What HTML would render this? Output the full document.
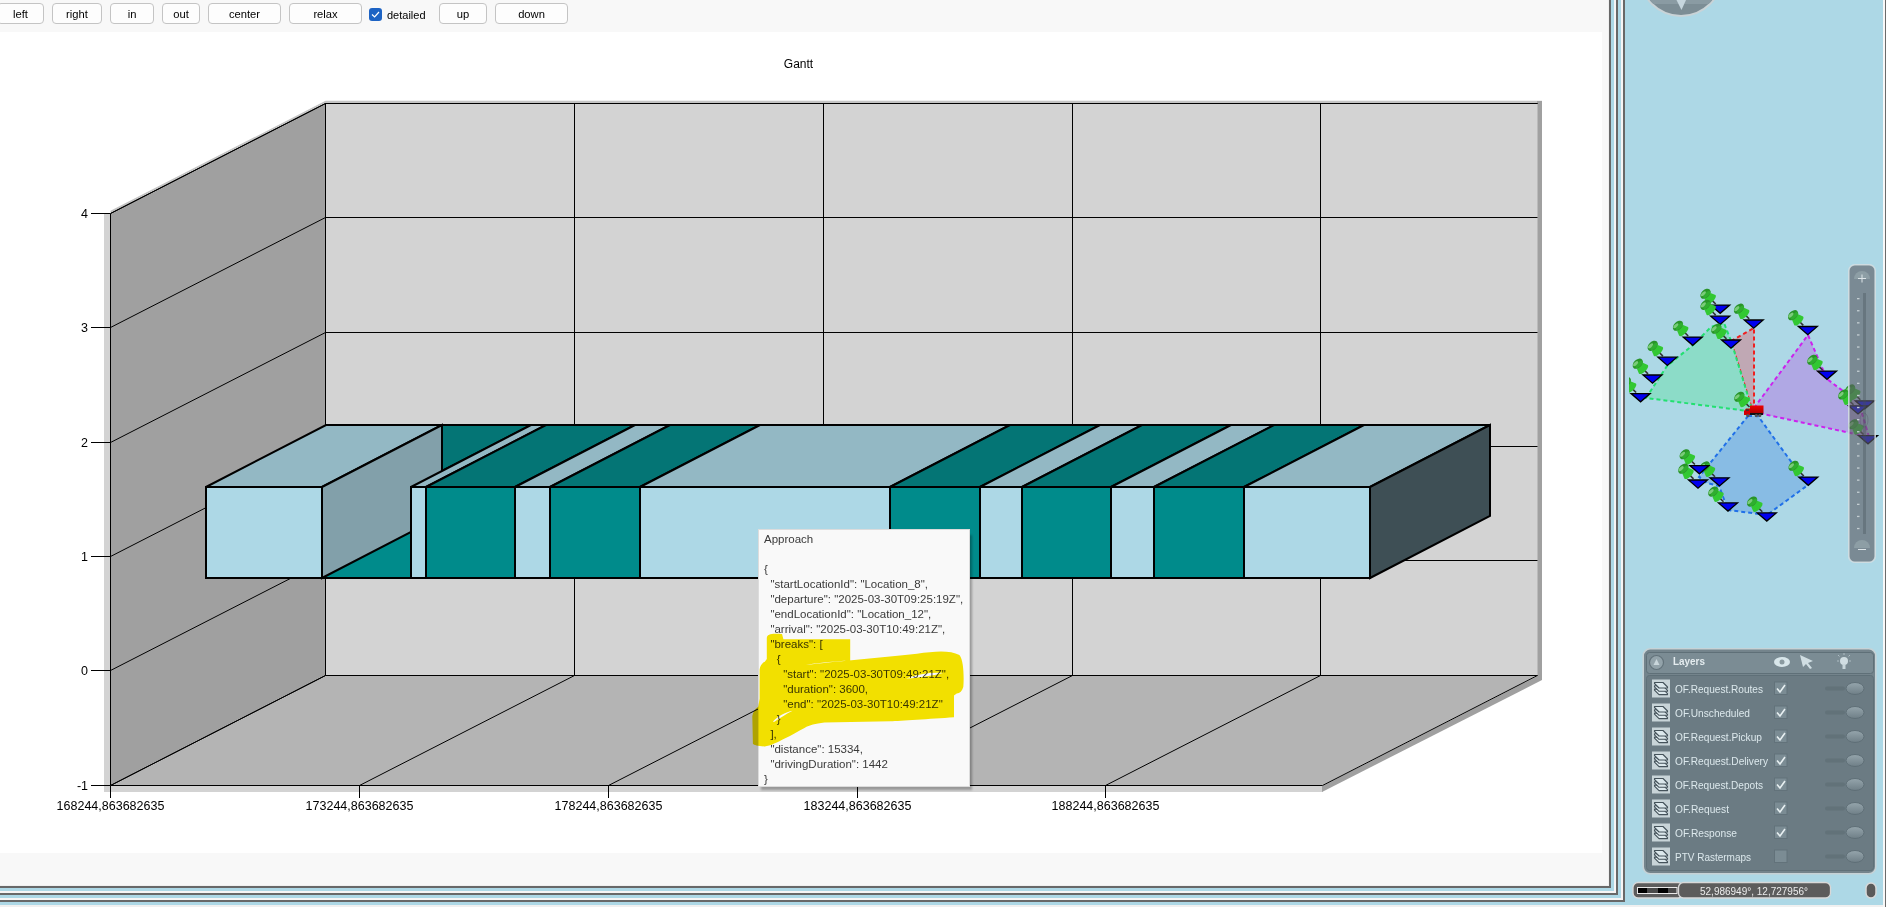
<!DOCTYPE html>
<html><head><meta charset="utf-8"><title>Gantt</title>
<style>
html,body{margin:0;padding:0;}
body{width:1886px;height:907px;overflow:hidden;position:relative;background:#f0f0f0;font-family:"Liberation Sans", sans-serif;}
.abs{position:absolute;}
.btn{position:absolute;top:3px;height:19px;border:1px solid #c4c4c4;border-radius:4px;background:#fdfdfd;font-size:11.2px;color:#000;text-align:center;line-height:21px;box-sizing:content-box;white-space:nowrap;}
svg{position:absolute;left:0;top:0;overflow:visible;}
</style></head><body>

<div class="abs" style="left:0;top:0;width:1886px;height:905px;background:#add8e6"></div>
<div class="abs" style="left:0;top:0;width:1625px;height:902px;background:#686868"></div>
<div class="abs" style="left:0;top:0;width:1623px;height:900px;background:#f6f4f4"></div>
<div class="abs" style="left:0;top:0;width:1621px;height:898px;background:#add8e6"></div>
<div class="abs" style="left:0;top:0;width:1618px;height:895px;background:#686868"></div>
<div class="abs" style="left:0;top:0;width:1616px;height:893px;background:#f6f4f4"></div>
<div class="abs" style="left:0;top:0;width:1614px;height:891px;background:#add8e6"></div>
<div class="abs" style="left:0;top:0;width:1611px;height:888px;background:#686868"></div>
<div class="abs" style="left:0;top:0;width:1609px;height:886px;background:#f0f0f0"></div>
<div class="abs" style="left:0;top:0;width:1608px;height:885px;background:#f8f8f8"></div>
<div class="abs" style="left:0;top:32px;width:1602px;height:821px;background:#ffffff"></div>
<div class="btn" style="left:-3px;width:45px">left</div>
<div class="btn" style="left:52px;width:48px">right</div>
<div class="btn" style="left:110px;width:42px">in</div>
<div class="btn" style="left:162px;width:36px">out</div>
<div class="btn" style="left:208px;width:71px">center</div>
<div class="btn" style="left:289px;width:71px">relax</div>
<div class="btn" style="left:439px;width:46px">up</div>
<div class="btn" style="left:495px;width:71px">down</div>
<div class="abs" style="left:369px;top:8px;width:13px;height:13px;border-radius:3px;background:#1d63c4"></div>
<svg width="1886" height="907" style="pointer-events:none"><path d="M372 14.5 L374.6 17 L379 12" stroke="#fff" stroke-width="1.2" fill="none"/></svg>
<div class="abs" style="left:387px;top:8px;font-size:11px;color:#000;line-height:15px">detailed</div>
<svg width="1886" height="907" style="font-family:"Liberation Sans", sans-serif"><rect x="104" y="214" width="6" height="578" fill="#d3d3d3"/><polygon points="110.5,210.8 325.5,100.8 1542,100.8 1542,103.5 325.5,103.5 110.5,213.5" fill="#c4c4c4"/><rect x="1537" y="101" width="5" height="579" fill="#a0a0a0"/><rect x="104" y="786" width="1219" height="6" fill="#d3d3d3"/><polygon points="1322,786 1537.5,676 1542,676 1542,680 1322,792" fill="#a0a0a0"/><polygon points="110.5,213.5 325.5,103.5 325.5,675.5 110.5,785.5" fill="#a0a0a0"/><rect x="325.5" y="103.5" width="1212" height="572" fill="#d3d3d3"/><polygon points="110.5,785.5 325.5,675.5 1537.5,675.5 1322.5,785.5" fill="#b4b4b4"/><path d="M110.5 785.5 L325.5 675.5 L1537.5 675.5 M110.5 670.5 L325.5 560.5 L1537.5 560.5 M110.5 556.5 L325.5 446.5 L1537.5 446.5 M110.5 442.5 L325.5 332.5 L1537.5 332.5 M110.5 327.5 L325.5 217.5 L1537.5 217.5 M110.5 213.5 L325.5 103.5 L1537.5 103.5 M110.5 785.5 L325.5 675.5 L325.5 103.5 M359.5 785.5 L574.5 675.5 L574.5 103.5 M608.5 785.5 L823.5 675.5 L823.5 103.5 M857.5 785.5 L1072.5 675.5 L1072.5 103.5 M1105.5 785.5 L1320.5 675.5 L1320.5 103.5" stroke="#000" stroke-width="1" fill="none"/><path d="M110.5 785.5 L110.5 213.5 L325.5 103.5 L1537.5 103.5 M325.5 103.5 L325.5 675.5 M110.5 785.5 L1322.5 785.5 L1537.5 675.5" stroke="#000" stroke-width="1" fill="none"/><path d="M91 785.5 L110 785.5 M91 670.5 L110 670.5 M91 556.5 L110 556.5 M91 442.5 L110 442.5 M91 327.5 L110 327.5 M91 213.5 L110 213.5 M110.5 786 L110.5 798 M359.5 786 L359.5 798 M608.5 786 L608.5 798 M857.5 786 L857.5 798 M1105.5 786 L1105.5 798" stroke="#000" stroke-width="1" fill="none"/><text x="88" y="790.0" font-size="12.5" text-anchor="end" fill="#000">-1</text><text x="88" y="675.0" font-size="12.5" text-anchor="end" fill="#000">0</text><text x="88" y="561.0" font-size="12.5" text-anchor="end" fill="#000">1</text><text x="88" y="447.0" font-size="12.5" text-anchor="end" fill="#000">2</text><text x="88" y="332.0" font-size="12.5" text-anchor="end" fill="#000">3</text><text x="88" y="218.0" font-size="12.5" text-anchor="end" fill="#000">4</text><text x="110.5" y="810" font-size="12.5" text-anchor="middle" fill="#000">168244,863682635</text><text x="359.5" y="810" font-size="12.5" text-anchor="middle" fill="#000">173244,863682635</text><text x="608.5" y="810" font-size="12.5" text-anchor="middle" fill="#000">178244,863682635</text><text x="857.5" y="810" font-size="12.5" text-anchor="middle" fill="#000">183244,863682635</text><text x="1105.5" y="810" font-size="12.5" text-anchor="middle" fill="#000">188244,863682635</text><text x="798.5" y="67.5" font-size="12" text-anchor="middle" fill="#000">Gantt</text><polygon points="322,487 442,425 531,425 411,487" fill="#047575" stroke="#000" stroke-width="2" stroke-linejoin="miter"/><rect x="322" y="487" width="89" height="91" fill="#008b8b" stroke="#000" stroke-width="2"/><polygon points="206,487 326,425 442,425 322,487" fill="#93b8c4" stroke="#000" stroke-width="2" stroke-linejoin="miter"/><rect x="206" y="487" width="116" height="91" fill="#add8e6" stroke="#000" stroke-width="2"/><polygon points="322,487 442,425 442,516 322,578" fill="#82a0aa" stroke="#000" stroke-width="2"/><polygon points="411,487 531,425 546,425 426,487" fill="#93b8c4" stroke="#000" stroke-width="2" stroke-linejoin="miter"/><rect x="411" y="487" width="15" height="91" fill="#add8e6" stroke="#000" stroke-width="2"/><polygon points="426,487 546,425 635,425 515,487" fill="#047575" stroke="#000" stroke-width="2" stroke-linejoin="miter"/><rect x="426" y="487" width="89" height="91" fill="#008b8b" stroke="#000" stroke-width="2"/><polygon points="515,487 635,425 670,425 550,487" fill="#93b8c4" stroke="#000" stroke-width="2" stroke-linejoin="miter"/><rect x="515" y="487" width="35" height="91" fill="#add8e6" stroke="#000" stroke-width="2"/><polygon points="550,487 670,425 760,425 640,487" fill="#047575" stroke="#000" stroke-width="2" stroke-linejoin="miter"/><rect x="550" y="487" width="90" height="91" fill="#008b8b" stroke="#000" stroke-width="2"/><polygon points="640,487 760,425 1010,425 890,487" fill="#93b8c4" stroke="#000" stroke-width="2" stroke-linejoin="miter"/><rect x="640" y="487" width="250" height="91" fill="#add8e6" stroke="#000" stroke-width="2"/><polygon points="890,487 1010,425 1100,425 980,487" fill="#047575" stroke="#000" stroke-width="2" stroke-linejoin="miter"/><rect x="890" y="487" width="90" height="91" fill="#008b8b" stroke="#000" stroke-width="2"/><polygon points="980,487 1100,425 1142,425 1022,487" fill="#93b8c4" stroke="#000" stroke-width="2" stroke-linejoin="miter"/><rect x="980" y="487" width="42" height="91" fill="#add8e6" stroke="#000" stroke-width="2"/><polygon points="1022,487 1142,425 1231,425 1111,487" fill="#047575" stroke="#000" stroke-width="2" stroke-linejoin="miter"/><rect x="1022" y="487" width="89" height="91" fill="#008b8b" stroke="#000" stroke-width="2"/><polygon points="1111,487 1231,425 1274,425 1154,487" fill="#93b8c4" stroke="#000" stroke-width="2" stroke-linejoin="miter"/><rect x="1111" y="487" width="43" height="91" fill="#add8e6" stroke="#000" stroke-width="2"/><polygon points="1154,487 1274,425 1364,425 1244,487" fill="#047575" stroke="#000" stroke-width="2" stroke-linejoin="miter"/><rect x="1154" y="487" width="90" height="91" fill="#008b8b" stroke="#000" stroke-width="2"/><polygon points="1244,487 1364,425 1490,425 1370,487" fill="#93b8c4" stroke="#000" stroke-width="2" stroke-linejoin="miter"/><rect x="1244" y="487" width="126" height="91" fill="#add8e6" stroke="#000" stroke-width="2"/><polygon points="1370,487 1490,425 1490,516 1370,578" fill="#3e4f55" stroke="#000" stroke-width="2"/></svg>
<div class="abs" style="left:761px;top:535px;width:211px;height:255px;background:rgba(0,0,0,0.28);filter:blur(1.2px)"></div>
<div class="abs" style="left:758px;top:529px;width:210px;height:256px;background:#f9f9f9;border:1px solid #dcdcdc"></div>
<div class="abs" id="tt" style="left:764px;top:532px;font-size:11.5px;line-height:15px;color:#3a3a3a;white-space:pre">Approach

{
  "startLocationId": "Location_8",
  "departure": "2025-03-30T09:25:19Z",
  "endLocationId": "Location_12",
  "arrival": "2025-03-30T10:49:21Z",
  "breaks": [
    {
      "start": "2025-03-30T09:49:21Z",
      "duration": 3600,
      "end": "2025-03-30T10:49:21Z"
    }
  ],
  "distance": 15334,
  "drivingDuration": 1442
}</div>
<svg width="1886" height="907" style="mix-blend-mode:multiply"><path fill="#f8e600" fill-rule="evenodd" d="M766.8 637.9 C767 634, 772 633, 782 634 L783.4 639.3 L850.2 639.3 L850.2 660.4 C835 661, 815 663, 805.9 665 C830 662, 880 658, 917 653.8 C935 651, 950 650, 959.4 655.1 C964 660, 964 680, 963.3 686.9 C962 691, 960 693, 956.7 693.5 L954 695.5 L954 717.3 C930 719, 900 721, 890.6 721.3 L824.4 722.6 C815 724, 810 725, 804.5 727.9 C798 731, 792 735, 784.7 738.5 C778 742, 770 746, 764.8 746.4 C758 746.5, 754 745, 752.9 743.8 L752.3 716 C753 712, 755 709, 758.2 706.7 L759.6 698.8 L759.6 669.7 C760 666, 762 663, 764.8 661.8 L766.8 659.1 Z M773 721.5 C778 716, 786 712, 792.6 710.7 C786 714, 780 718, 774 722 Z M906 678.5 C918 674, 932 672, 943 673 C935 675, 920 678, 906 678.5 Z"/></svg>
<svg width="1886" height="907"><defs><clipPath id="mapclip"><rect x="1629" y="0" width="254" height="905"/></clipPath></defs><rect x="1883" y="0" width="2" height="907" fill="#f8f8f8"/><rect x="1885" y="0" width="1" height="907" fill="#6b6b6b"/><g clip-path="url(#mapclip)"><circle cx="1681" cy="-25" r="42" fill="#c9d3d7"/><circle cx="1681" cy="-25" r="40" fill="#7c8d95"/><clipPath id="cc"><circle cx="1681" cy="-25" r="40"/></clipPath><polygon clip-path="url(#cc)" points="1640,0 1720,0 1722,4 1640,4" fill="#8a9ba3"/><polygon points="1676.5,0 1686,0 1681.5,10" fill="#c6d6de"/><polygon points="1731,341 1754,328 1754,409 1752,409" fill="#c0a8b4" stroke="#ee2020" stroke-width="2" stroke-dasharray="4,3"/><polygon points="1646,398 1667,366 1693,345 1711,327 1724,323 1731,341 1752,409 1748,411" fill="#8cdcc8" stroke="#22e070" stroke-width="2" stroke-dasharray="4,3"/><polygon points="1754,408 1808,335 1827,379 1859,403 1869,437 1763,414" fill="#b0a8e4" stroke="#cc22ee" stroke-width="2" stroke-dasharray="4,3"/><polygon points="1748,416 1758,416 1808,485 1767,515 1728,510 1719,486 1707,483 1699,477" fill="#88bce4" stroke="#2070e8" stroke-width="2" stroke-dasharray="4,3"/><g transform="translate(1640.6,401.8)"><g transform="translate(-4.5,-9.3) rotate(-45)"><line x1="0" y1="0" x2="0" y2="-5.5" stroke="#333" stroke-width="1.6"/><path d="M-6.2 -6.5 C-6.2 -3, 6.2 -3, 6.2 -6.5 L4.2 -11.5 L-4.2 -11.5 Z" fill="#32c832"/><ellipse cx="0" cy="-14.5" rx="6" ry="4" fill="#299429"/><ellipse cx="0.5" cy="-13" rx="4.8" ry="2" fill="#2fae2f"/><ellipse cx="-1.5" cy="-16" rx="3.2" ry="1.5" fill="#7acc7a"/></g><polygon points="-9.5,-8.2 9.5,-8.2 0,0" fill="#0000f0" stroke="#000" stroke-width="1.3" stroke-linejoin="miter"/></g><g transform="translate(1652.5,383.2)"><g transform="translate(-4.5,-9.3) rotate(-45)"><line x1="0" y1="0" x2="0" y2="-5.5" stroke="#333" stroke-width="1.6"/><path d="M-6.2 -6.5 C-6.2 -3, 6.2 -3, 6.2 -6.5 L4.2 -11.5 L-4.2 -11.5 Z" fill="#32c832"/><ellipse cx="0" cy="-14.5" rx="6" ry="4" fill="#299429"/><ellipse cx="0.5" cy="-13" rx="4.8" ry="2" fill="#2fae2f"/><ellipse cx="-1.5" cy="-16" rx="3.2" ry="1.5" fill="#7acc7a"/></g><polygon points="-9.5,-8.2 9.5,-8.2 0,0" fill="#0000f0" stroke="#000" stroke-width="1.3" stroke-linejoin="miter"/></g><g transform="translate(1667.4,365.4)"><g transform="translate(-4.5,-9.3) rotate(-45)"><line x1="0" y1="0" x2="0" y2="-5.5" stroke="#333" stroke-width="1.6"/><path d="M-6.2 -6.5 C-6.2 -3, 6.2 -3, 6.2 -6.5 L4.2 -11.5 L-4.2 -11.5 Z" fill="#32c832"/><ellipse cx="0" cy="-14.5" rx="6" ry="4" fill="#299429"/><ellipse cx="0.5" cy="-13" rx="4.8" ry="2" fill="#2fae2f"/><ellipse cx="-1.5" cy="-16" rx="3.2" ry="1.5" fill="#7acc7a"/></g><polygon points="-9.5,-8.2 9.5,-8.2 0,0" fill="#0000f0" stroke="#000" stroke-width="1.3" stroke-linejoin="miter"/></g><g transform="translate(1692.7,345.3)"><g transform="translate(-4.5,-9.3) rotate(-45)"><line x1="0" y1="0" x2="0" y2="-5.5" stroke="#333" stroke-width="1.6"/><path d="M-6.2 -6.5 C-6.2 -3, 6.2 -3, 6.2 -6.5 L4.2 -11.5 L-4.2 -11.5 Z" fill="#32c832"/><ellipse cx="0" cy="-14.5" rx="6" ry="4" fill="#299429"/><ellipse cx="0.5" cy="-13" rx="4.8" ry="2" fill="#2fae2f"/><ellipse cx="-1.5" cy="-16" rx="3.2" ry="1.5" fill="#7acc7a"/></g><polygon points="-9.5,-8.2 9.5,-8.2 0,0" fill="#0000f0" stroke="#000" stroke-width="1.3" stroke-linejoin="miter"/></g><g transform="translate(1720.2,313.3)"><g transform="translate(-4.5,-9.3) rotate(-45)"><line x1="0" y1="0" x2="0" y2="-5.5" stroke="#333" stroke-width="1.6"/><path d="M-6.2 -6.5 C-6.2 -3, 6.2 -3, 6.2 -6.5 L4.2 -11.5 L-4.2 -11.5 Z" fill="#32c832"/><ellipse cx="0" cy="-14.5" rx="6" ry="4" fill="#299429"/><ellipse cx="0.5" cy="-13" rx="4.8" ry="2" fill="#2fae2f"/><ellipse cx="-1.5" cy="-16" rx="3.2" ry="1.5" fill="#7acc7a"/></g><polygon points="-9.5,-8.2 9.5,-8.2 0,0" fill="#0000f0" stroke="#000" stroke-width="1.3" stroke-linejoin="miter"/></g><g transform="translate(1720.2,324.4)"><g transform="translate(-4.5,-9.3) rotate(-45)"><line x1="0" y1="0" x2="0" y2="-5.5" stroke="#333" stroke-width="1.6"/><path d="M-6.2 -6.5 C-6.2 -3, 6.2 -3, 6.2 -6.5 L4.2 -11.5 L-4.2 -11.5 Z" fill="#32c832"/><ellipse cx="0" cy="-14.5" rx="6" ry="4" fill="#299429"/><ellipse cx="0.5" cy="-13" rx="4.8" ry="2" fill="#2fae2f"/><ellipse cx="-1.5" cy="-16" rx="3.2" ry="1.5" fill="#7acc7a"/></g><polygon points="-9.5,-8.2 9.5,-8.2 0,0" fill="#0000f0" stroke="#000" stroke-width="1.3" stroke-linejoin="miter"/></g><g transform="translate(1731,348.2)"><g transform="translate(-4.5,-9.3) rotate(-45)"><line x1="0" y1="0" x2="0" y2="-5.5" stroke="#333" stroke-width="1.6"/><path d="M-6.2 -6.5 C-6.2 -3, 6.2 -3, 6.2 -6.5 L4.2 -11.5 L-4.2 -11.5 Z" fill="#32c832"/><ellipse cx="0" cy="-14.5" rx="6" ry="4" fill="#299429"/><ellipse cx="0.5" cy="-13" rx="4.8" ry="2" fill="#2fae2f"/><ellipse cx="-1.5" cy="-16" rx="3.2" ry="1.5" fill="#7acc7a"/></g><polygon points="-9.5,-8.2 9.5,-8.2 0,0" fill="#0000f0" stroke="#000" stroke-width="1.3" stroke-linejoin="miter"/></g><g transform="translate(1753.7,328.2)"><g transform="translate(-4.5,-9.3) rotate(-45)"><line x1="0" y1="0" x2="0" y2="-5.5" stroke="#333" stroke-width="1.6"/><path d="M-6.2 -6.5 C-6.2 -3, 6.2 -3, 6.2 -6.5 L4.2 -11.5 L-4.2 -11.5 Z" fill="#32c832"/><ellipse cx="0" cy="-14.5" rx="6" ry="4" fill="#299429"/><ellipse cx="0.5" cy="-13" rx="4.8" ry="2" fill="#2fae2f"/><ellipse cx="-1.5" cy="-16" rx="3.2" ry="1.5" fill="#7acc7a"/></g><polygon points="-9.5,-8.2 9.5,-8.2 0,0" fill="#0000f0" stroke="#000" stroke-width="1.3" stroke-linejoin="miter"/></g><g transform="translate(1807.8,334.7)"><g transform="translate(-4.5,-9.3) rotate(-45)"><line x1="0" y1="0" x2="0" y2="-5.5" stroke="#333" stroke-width="1.6"/><path d="M-6.2 -6.5 C-6.2 -3, 6.2 -3, 6.2 -6.5 L4.2 -11.5 L-4.2 -11.5 Z" fill="#32c832"/><ellipse cx="0" cy="-14.5" rx="6" ry="4" fill="#299429"/><ellipse cx="0.5" cy="-13" rx="4.8" ry="2" fill="#2fae2f"/><ellipse cx="-1.5" cy="-16" rx="3.2" ry="1.5" fill="#7acc7a"/></g><polygon points="-9.5,-8.2 9.5,-8.2 0,0" fill="#0000f0" stroke="#000" stroke-width="1.3" stroke-linejoin="miter"/></g><g transform="translate(1827,379.3)"><g transform="translate(-4.5,-9.3) rotate(-45)"><line x1="0" y1="0" x2="0" y2="-5.5" stroke="#333" stroke-width="1.6"/><path d="M-6.2 -6.5 C-6.2 -3, 6.2 -3, 6.2 -6.5 L4.2 -11.5 L-4.2 -11.5 Z" fill="#32c832"/><ellipse cx="0" cy="-14.5" rx="6" ry="4" fill="#299429"/><ellipse cx="0.5" cy="-13" rx="4.8" ry="2" fill="#2fae2f"/><ellipse cx="-1.5" cy="-16" rx="3.2" ry="1.5" fill="#7acc7a"/></g><polygon points="-9.5,-8.2 9.5,-8.2 0,0" fill="#0000f0" stroke="#000" stroke-width="1.3" stroke-linejoin="miter"/></g><g transform="translate(1864.8,409)"><g transform="translate(-4.5,-9.3) rotate(-45)"><line x1="0" y1="0" x2="0" y2="-5.5" stroke="#333" stroke-width="1.6"/><path d="M-6.2 -6.5 C-6.2 -3, 6.2 -3, 6.2 -6.5 L4.2 -11.5 L-4.2 -11.5 Z" fill="#32c832"/><ellipse cx="0" cy="-14.5" rx="6" ry="4" fill="#299429"/><ellipse cx="0.5" cy="-13" rx="4.8" ry="2" fill="#2fae2f"/><ellipse cx="-1.5" cy="-16" rx="3.2" ry="1.5" fill="#7acc7a"/></g><polygon points="-9.5,-8.2 9.5,-8.2 0,0" fill="#0000f0" stroke="#000" stroke-width="1.3" stroke-linejoin="miter"/></g><g transform="translate(1858,414)"><g transform="translate(-4.5,-9.3) rotate(-45)"><line x1="0" y1="0" x2="0" y2="-5.5" stroke="#333" stroke-width="1.6"/><path d="M-6.2 -6.5 C-6.2 -3, 6.2 -3, 6.2 -6.5 L4.2 -11.5 L-4.2 -11.5 Z" fill="#32c832"/><ellipse cx="0" cy="-14.5" rx="6" ry="4" fill="#299429"/><ellipse cx="0.5" cy="-13" rx="4.8" ry="2" fill="#2fae2f"/><ellipse cx="-1.5" cy="-16" rx="3.2" ry="1.5" fill="#7acc7a"/></g><polygon points="-9.5,-8.2 9.5,-8.2 0,0" fill="#0000f0" stroke="#000" stroke-width="1.3" stroke-linejoin="miter"/></g><g transform="translate(1868,443.8)"><g transform="translate(-4.5,-9.3) rotate(-45)"><line x1="0" y1="0" x2="0" y2="-5.5" stroke="#333" stroke-width="1.6"/><path d="M-6.2 -6.5 C-6.2 -3, 6.2 -3, 6.2 -6.5 L4.2 -11.5 L-4.2 -11.5 Z" fill="#32c832"/><ellipse cx="0" cy="-14.5" rx="6" ry="4" fill="#299429"/><ellipse cx="0.5" cy="-13" rx="4.8" ry="2" fill="#2fae2f"/><ellipse cx="-1.5" cy="-16" rx="3.2" ry="1.5" fill="#7acc7a"/></g><polygon points="-9.5,-8.2 9.5,-8.2 0,0" fill="#0000f0" stroke="#000" stroke-width="1.3" stroke-linejoin="miter"/></g><g transform="translate(1719.5,486)"><g transform="translate(-4.5,-9.3) rotate(-45)"><line x1="0" y1="0" x2="0" y2="-5.5" stroke="#333" stroke-width="1.6"/><path d="M-6.2 -6.5 C-6.2 -3, 6.2 -3, 6.2 -6.5 L4.2 -11.5 L-4.2 -11.5 Z" fill="#32c832"/><ellipse cx="0" cy="-14.5" rx="6" ry="4" fill="#299429"/><ellipse cx="0.5" cy="-13" rx="4.8" ry="2" fill="#2fae2f"/><ellipse cx="-1.5" cy="-16" rx="3.2" ry="1.5" fill="#7acc7a"/></g><polygon points="-9.5,-8.2 9.5,-8.2 0,0" fill="#0000f0" stroke="#000" stroke-width="1.3" stroke-linejoin="miter"/></g><g transform="translate(1699.4,473.8)"><g transform="translate(-4.5,-9.3) rotate(-45)"><line x1="0" y1="0" x2="0" y2="-5.5" stroke="#333" stroke-width="1.6"/><path d="M-6.2 -6.5 C-6.2 -3, 6.2 -3, 6.2 -6.5 L4.2 -11.5 L-4.2 -11.5 Z" fill="#32c832"/><ellipse cx="0" cy="-14.5" rx="6" ry="4" fill="#299429"/><ellipse cx="0.5" cy="-13" rx="4.8" ry="2" fill="#2fae2f"/><ellipse cx="-1.5" cy="-16" rx="3.2" ry="1.5" fill="#7acc7a"/></g><polygon points="-9.5,-8.2 9.5,-8.2 0,0" fill="#0000f0" stroke="#000" stroke-width="1.3" stroke-linejoin="miter"/></g><g transform="translate(1698,488.2)"><g transform="translate(-4.5,-9.3) rotate(-45)"><line x1="0" y1="0" x2="0" y2="-5.5" stroke="#333" stroke-width="1.6"/><path d="M-6.2 -6.5 C-6.2 -3, 6.2 -3, 6.2 -6.5 L4.2 -11.5 L-4.2 -11.5 Z" fill="#32c832"/><ellipse cx="0" cy="-14.5" rx="6" ry="4" fill="#299429"/><ellipse cx="0.5" cy="-13" rx="4.8" ry="2" fill="#2fae2f"/><ellipse cx="-1.5" cy="-16" rx="3.2" ry="1.5" fill="#7acc7a"/></g><polygon points="-9.5,-8.2 9.5,-8.2 0,0" fill="#0000f0" stroke="#000" stroke-width="1.3" stroke-linejoin="miter"/></g><g transform="translate(1728,511.1)"><g transform="translate(-4.5,-9.3) rotate(-45)"><line x1="0" y1="0" x2="0" y2="-5.5" stroke="#333" stroke-width="1.6"/><path d="M-6.2 -6.5 C-6.2 -3, 6.2 -3, 6.2 -6.5 L4.2 -11.5 L-4.2 -11.5 Z" fill="#32c832"/><ellipse cx="0" cy="-14.5" rx="6" ry="4" fill="#299429"/><ellipse cx="0.5" cy="-13" rx="4.8" ry="2" fill="#2fae2f"/><ellipse cx="-1.5" cy="-16" rx="3.2" ry="1.5" fill="#7acc7a"/></g><polygon points="-9.5,-8.2 9.5,-8.2 0,0" fill="#0000f0" stroke="#000" stroke-width="1.3" stroke-linejoin="miter"/></g><g transform="translate(1766.8,521.1)"><g transform="translate(-4.5,-9.3) rotate(-45)"><line x1="0" y1="0" x2="0" y2="-5.5" stroke="#333" stroke-width="1.6"/><path d="M-6.2 -6.5 C-6.2 -3, 6.2 -3, 6.2 -6.5 L4.2 -11.5 L-4.2 -11.5 Z" fill="#32c832"/><ellipse cx="0" cy="-14.5" rx="6" ry="4" fill="#299429"/><ellipse cx="0.5" cy="-13" rx="4.8" ry="2" fill="#2fae2f"/><ellipse cx="-1.5" cy="-16" rx="3.2" ry="1.5" fill="#7acc7a"/></g><polygon points="-9.5,-8.2 9.5,-8.2 0,0" fill="#0000f0" stroke="#000" stroke-width="1.3" stroke-linejoin="miter"/></g><g transform="translate(1808.3,485.3)"><g transform="translate(-4.5,-9.3) rotate(-45)"><line x1="0" y1="0" x2="0" y2="-5.5" stroke="#333" stroke-width="1.6"/><path d="M-6.2 -6.5 C-6.2 -3, 6.2 -3, 6.2 -6.5 L4.2 -11.5 L-4.2 -11.5 Z" fill="#32c832"/><ellipse cx="0" cy="-14.5" rx="6" ry="4" fill="#299429"/><ellipse cx="0.5" cy="-13" rx="4.8" ry="2" fill="#2fae2f"/><ellipse cx="-1.5" cy="-16" rx="3.2" ry="1.5" fill="#7acc7a"/></g><polygon points="-9.5,-8.2 9.5,-8.2 0,0" fill="#0000f0" stroke="#000" stroke-width="1.3" stroke-linejoin="miter"/></g><g transform="translate(1749.5,407)"><g transform="rotate(-45)"><line x1="0" y1="0" x2="0" y2="-5.5" stroke="#333" stroke-width="1.6"/><path d="M-6.2 -6.5 C-6.2 -3, 6.2 -3, 6.2 -6.5 L4.2 -11.5 L-4.2 -11.5 Z" fill="#32c832"/><ellipse cx="0" cy="-14.5" rx="6" ry="4" fill="#299429"/><ellipse cx="0.5" cy="-13" rx="4.8" ry="2" fill="#2fae2f"/><ellipse cx="-1.5" cy="-16" rx="3.2" ry="1.5" fill="#7acc7a"/></g></g><defs><linearGradient id="tg" x1="0" y1="0" x2="0" y2="1"><stop offset="0" stop-color="#f00000"/><stop offset="1" stop-color="#a80000"/></linearGradient></defs><rect x="1750" y="405.5" width="13.5" height="8" fill="url(#tg)"/><rect x="1750" y="413" width="13" height="2" fill="#111"/><path d="M1744 415 L1744 411 L1746 408.5 L1750 408.5 L1750 415 Z" fill="#d40000"/><rect x="1746" y="409.3" width="2.8" height="1.5" fill="#333"/><circle cx="1747.8" cy="415.6" r="1.6" fill="#555"/><circle cx="1756.3" cy="415.6" r="1.6" fill="#555"/><circle cx="1759.8" cy="415.6" r="1.6" fill="#555"/><rect x="1848.8" y="264.8" width="26.4" height="297.4" rx="6" fill="rgba(92,92,100,0.63)" stroke="rgba(214,224,228,0.85)" stroke-width="1.6"/><rect x="1863" y="293" width="3" height="241" fill="rgba(70,80,88,0.35)"/><rect x="1857" y="298.0" width="2.5" height="1.3" fill="#c4ced2"/><rect x="1857" y="310.1" width="2.5" height="1.3" fill="#c4ced2"/><rect x="1857" y="322.2" width="2.5" height="1.3" fill="#c4ced2"/><rect x="1857" y="334.3" width="2.5" height="1.3" fill="#c4ced2"/><rect x="1857" y="346.4" width="2.5" height="1.3" fill="#c4ced2"/><rect x="1857" y="358.5" width="2.5" height="1.3" fill="#c4ced2"/><rect x="1857" y="370.6" width="2.5" height="1.3" fill="#c4ced2"/><rect x="1857" y="382.7" width="2.5" height="1.3" fill="#c4ced2"/><rect x="1857" y="394.8" width="2.5" height="1.3" fill="#c4ced2"/><rect x="1857" y="406.9" width="2.5" height="1.3" fill="#c4ced2"/><rect x="1857" y="419.0" width="2.5" height="1.3" fill="#c4ced2"/><rect x="1857" y="431.1" width="2.5" height="1.3" fill="#c4ced2"/><rect x="1857" y="443.2" width="2.5" height="1.3" fill="#c4ced2"/><rect x="1857" y="455.3" width="2.5" height="1.3" fill="#c4ced2"/><rect x="1857" y="467.4" width="2.5" height="1.3" fill="#c4ced2"/><rect x="1857" y="479.5" width="2.5" height="1.3" fill="#c4ced2"/><rect x="1857" y="491.6" width="2.5" height="1.3" fill="#c4ced2"/><rect x="1857" y="503.7" width="2.5" height="1.3" fill="#c4ced2"/><rect x="1857" y="515.8" width="2.5" height="1.3" fill="#c4ced2"/><rect x="1857" y="527.9" width="2.5" height="1.3" fill="#c4ced2"/><path d="M1854 279 A8 8 0 0 1 1870 279 Z" fill="#8d9ea5"/><path d="M1858 278.5 H1866 M1862 274.5 V282.5" stroke="#dde5e8" stroke-width="1"/><path d="M1854 548 A8 8 0 0 1 1870 548 Z" fill="#8d9ea5"/><path d="M1858 549.5 H1866" stroke="#dde5e8" stroke-width="1"/><ellipse cx="1864" cy="420" rx="4" ry="7" fill="none" stroke="#556" stroke-width="0.6" opacity="0.6"/><rect x="1643.2" y="648.8" width="232.6" height="225" rx="7" fill="#74848c" stroke="#c6d2d6" stroke-width="1.6"/><rect x="1646.5" y="652.5" width="227" height="21" rx="3" fill="#7b8c94" stroke="#5f7078" stroke-width="1"/><rect x="1646.5" y="675.5" width="227" height="195" rx="3" fill="#6b7b83" stroke="#5f7078" stroke-width="1"/><circle cx="1656.5" cy="662.5" r="7" fill="#93a3aa" stroke="#62727a" stroke-width="1.2"/><polygon points="1653.5,665 1659.5,665 1656.5,659" fill="#c9d6db"/><text x="1673" y="665" font-size="11.5" font-weight="bold" textLength="32" lengthAdjust="spacingAndGlyphs" fill="#e4ecef" font-family='"Liberation Sans", sans-serif'>Layers</text><ellipse cx="1782" cy="662" rx="8" ry="5" fill="#d8e6ea"/><circle cx="1782" cy="662" r="2.5" fill="#8a9aa0"/><path d="M1800 655 L1813 661 L1808 663 L1812 668 L1810 669 L1806 664 L1803 667 Z" fill="#cfdde2"/><circle cx="1844" cy="661" r="4" fill="#d0dde2"/><rect x="1842.5" y="664" width="3" height="5" fill="#c8d6db"/><path d="M1837 661 H1839 M1849 661 H1851 M1844 655 V653 M1839.5 656.5 L1838 655 M1848.5 656.5 L1850 655" stroke="#aebcc2" stroke-width="1"/><defs><linearGradient id="thg" x1="0" y1="0" x2="0" y2="1"><stop offset="0" stop-color="#95a5ac"/><stop offset="1" stop-color="#6f7f87"/></linearGradient></defs><rect x="1652" y="679.5" width="18" height="18" fill="#c8d4d8"/><path d="M1654.5 689.1 L1663 689.1 L1667.5 693.6 L1667.5 694.6 L1659 694.6 L1654.5 690.1 Z" fill="#dce8ec" stroke="#44525a" stroke-width="1.1" stroke-linejoin="round"/><path d="M1654.5 685.8 L1663 685.8 L1667.5 690.3 L1667.5 691.3 L1659 691.3 L1654.5 686.8 Z" fill="#dce8ec" stroke="#44525a" stroke-width="1.1" stroke-linejoin="round"/><path d="M1654.5 682.5 L1663 682.5 L1667.5 687.0 L1667.5 688.0 L1659 688.0 L1654.5 683.5 Z" fill="#dce8ec" stroke="#44525a" stroke-width="1.1" stroke-linejoin="round"/><text x="1675" y="692.5" font-size="11.5" fill="#dce8ec" textLength="88" lengthAdjust="spacingAndGlyphs" font-family='"Liberation Sans", sans-serif'>OF.Request.Routes</text><rect x="1774.5" y="682.0" width="12.5" height="12.5" fill="#7b8c94" stroke="#62727a" stroke-width="1"/><path d="M1777 688.5 l3 3.5 l5 -7" stroke="#e8f0f2" stroke-width="1.6" fill="none"/><rect x="1825" y="686.5" width="20" height="4" rx="2" fill="#627279"/><ellipse cx="1855" cy="688.5" rx="9" ry="6" fill="url(#thg)" stroke="#5f6f77" stroke-width="1"/><rect x="1652" y="703.5" width="18" height="18" fill="#c8d4d8"/><path d="M1654.5 713.1 L1663 713.1 L1667.5 717.6 L1667.5 718.6 L1659 718.6 L1654.5 714.1 Z" fill="#dce8ec" stroke="#44525a" stroke-width="1.1" stroke-linejoin="round"/><path d="M1654.5 709.8 L1663 709.8 L1667.5 714.3 L1667.5 715.3 L1659 715.3 L1654.5 710.8 Z" fill="#dce8ec" stroke="#44525a" stroke-width="1.1" stroke-linejoin="round"/><path d="M1654.5 706.5 L1663 706.5 L1667.5 711.0 L1667.5 712.0 L1659 712.0 L1654.5 707.5 Z" fill="#dce8ec" stroke="#44525a" stroke-width="1.1" stroke-linejoin="round"/><text x="1675" y="716.5" font-size="11.5" fill="#dce8ec" textLength="75" lengthAdjust="spacingAndGlyphs" font-family='"Liberation Sans", sans-serif'>OF.Unscheduled</text><rect x="1774.5" y="706.0" width="12.5" height="12.5" fill="#7b8c94" stroke="#62727a" stroke-width="1"/><path d="M1777 712.5 l3 3.5 l5 -7" stroke="#e8f0f2" stroke-width="1.6" fill="none"/><rect x="1825" y="710.5" width="20" height="4" rx="2" fill="#627279"/><ellipse cx="1855" cy="712.5" rx="9" ry="6" fill="url(#thg)" stroke="#5f6f77" stroke-width="1"/><rect x="1652" y="727.5" width="18" height="18" fill="#c8d4d8"/><path d="M1654.5 737.1 L1663 737.1 L1667.5 741.6 L1667.5 742.6 L1659 742.6 L1654.5 738.1 Z" fill="#dce8ec" stroke="#44525a" stroke-width="1.1" stroke-linejoin="round"/><path d="M1654.5 733.8 L1663 733.8 L1667.5 738.3 L1667.5 739.3 L1659 739.3 L1654.5 734.8 Z" fill="#dce8ec" stroke="#44525a" stroke-width="1.1" stroke-linejoin="round"/><path d="M1654.5 730.5 L1663 730.5 L1667.5 735.0 L1667.5 736.0 L1659 736.0 L1654.5 731.5 Z" fill="#dce8ec" stroke="#44525a" stroke-width="1.1" stroke-linejoin="round"/><text x="1675" y="740.5" font-size="11.5" fill="#dce8ec" textLength="87" lengthAdjust="spacingAndGlyphs" font-family='"Liberation Sans", sans-serif'>OF.Request.Pickup</text><rect x="1774.5" y="730.0" width="12.5" height="12.5" fill="#7b8c94" stroke="#62727a" stroke-width="1"/><path d="M1777 736.5 l3 3.5 l5 -7" stroke="#e8f0f2" stroke-width="1.6" fill="none"/><rect x="1825" y="734.5" width="20" height="4" rx="2" fill="#627279"/><ellipse cx="1855" cy="736.5" rx="9" ry="6" fill="url(#thg)" stroke="#5f6f77" stroke-width="1"/><rect x="1652" y="751.5" width="18" height="18" fill="#c8d4d8"/><path d="M1654.5 761.1 L1663 761.1 L1667.5 765.6 L1667.5 766.6 L1659 766.6 L1654.5 762.1 Z" fill="#dce8ec" stroke="#44525a" stroke-width="1.1" stroke-linejoin="round"/><path d="M1654.5 757.8 L1663 757.8 L1667.5 762.3 L1667.5 763.3 L1659 763.3 L1654.5 758.8 Z" fill="#dce8ec" stroke="#44525a" stroke-width="1.1" stroke-linejoin="round"/><path d="M1654.5 754.5 L1663 754.5 L1667.5 759.0 L1667.5 760.0 L1659 760.0 L1654.5 755.5 Z" fill="#dce8ec" stroke="#44525a" stroke-width="1.1" stroke-linejoin="round"/><text x="1675" y="764.5" font-size="11.5" fill="#dce8ec" textLength="93" lengthAdjust="spacingAndGlyphs" font-family='"Liberation Sans", sans-serif'>OF.Request.Delivery</text><rect x="1774.5" y="754.0" width="12.5" height="12.5" fill="#7b8c94" stroke="#62727a" stroke-width="1"/><path d="M1777 760.5 l3 3.5 l5 -7" stroke="#e8f0f2" stroke-width="1.6" fill="none"/><rect x="1825" y="758.5" width="20" height="4" rx="2" fill="#627279"/><ellipse cx="1855" cy="760.5" rx="9" ry="6" fill="url(#thg)" stroke="#5f6f77" stroke-width="1"/><rect x="1652" y="775.5" width="18" height="18" fill="#c8d4d8"/><path d="M1654.5 785.1 L1663 785.1 L1667.5 789.6 L1667.5 790.6 L1659 790.6 L1654.5 786.1 Z" fill="#dce8ec" stroke="#44525a" stroke-width="1.1" stroke-linejoin="round"/><path d="M1654.5 781.8 L1663 781.8 L1667.5 786.3 L1667.5 787.3 L1659 787.3 L1654.5 782.8 Z" fill="#dce8ec" stroke="#44525a" stroke-width="1.1" stroke-linejoin="round"/><path d="M1654.5 778.5 L1663 778.5 L1667.5 783.0 L1667.5 784.0 L1659 784.0 L1654.5 779.5 Z" fill="#dce8ec" stroke="#44525a" stroke-width="1.1" stroke-linejoin="round"/><text x="1675" y="788.5" font-size="11.5" fill="#dce8ec" textLength="88" lengthAdjust="spacingAndGlyphs" font-family='"Liberation Sans", sans-serif'>OF.Request.Depots</text><rect x="1774.5" y="778.0" width="12.5" height="12.5" fill="#7b8c94" stroke="#62727a" stroke-width="1"/><path d="M1777 784.5 l3 3.5 l5 -7" stroke="#e8f0f2" stroke-width="1.6" fill="none"/><rect x="1825" y="782.5" width="20" height="4" rx="2" fill="#627279"/><ellipse cx="1855" cy="784.5" rx="9" ry="6" fill="url(#thg)" stroke="#5f6f77" stroke-width="1"/><rect x="1652" y="799.5" width="18" height="18" fill="#c8d4d8"/><path d="M1654.5 809.1 L1663 809.1 L1667.5 813.6 L1667.5 814.6 L1659 814.6 L1654.5 810.1 Z" fill="#dce8ec" stroke="#44525a" stroke-width="1.1" stroke-linejoin="round"/><path d="M1654.5 805.8 L1663 805.8 L1667.5 810.3 L1667.5 811.3 L1659 811.3 L1654.5 806.8 Z" fill="#dce8ec" stroke="#44525a" stroke-width="1.1" stroke-linejoin="round"/><path d="M1654.5 802.5 L1663 802.5 L1667.5 807.0 L1667.5 808.0 L1659 808.0 L1654.5 803.5 Z" fill="#dce8ec" stroke="#44525a" stroke-width="1.1" stroke-linejoin="round"/><text x="1675" y="812.5" font-size="11.5" fill="#dce8ec" textLength="54" lengthAdjust="spacingAndGlyphs" font-family='"Liberation Sans", sans-serif'>OF.Request</text><rect x="1774.5" y="802.0" width="12.5" height="12.5" fill="#7b8c94" stroke="#62727a" stroke-width="1"/><path d="M1777 808.5 l3 3.5 l5 -7" stroke="#e8f0f2" stroke-width="1.6" fill="none"/><rect x="1825" y="806.5" width="20" height="4" rx="2" fill="#627279"/><ellipse cx="1855" cy="808.5" rx="9" ry="6" fill="url(#thg)" stroke="#5f6f77" stroke-width="1"/><rect x="1652" y="823.5" width="18" height="18" fill="#c8d4d8"/><path d="M1654.5 833.1 L1663 833.1 L1667.5 837.6 L1667.5 838.6 L1659 838.6 L1654.5 834.1 Z" fill="#dce8ec" stroke="#44525a" stroke-width="1.1" stroke-linejoin="round"/><path d="M1654.5 829.8 L1663 829.8 L1667.5 834.3 L1667.5 835.3 L1659 835.3 L1654.5 830.8 Z" fill="#dce8ec" stroke="#44525a" stroke-width="1.1" stroke-linejoin="round"/><path d="M1654.5 826.5 L1663 826.5 L1667.5 831.0 L1667.5 832.0 L1659 832.0 L1654.5 827.5 Z" fill="#dce8ec" stroke="#44525a" stroke-width="1.1" stroke-linejoin="round"/><text x="1675" y="836.5" font-size="11.5" fill="#dce8ec" textLength="62" lengthAdjust="spacingAndGlyphs" font-family='"Liberation Sans", sans-serif'>OF.Response</text><rect x="1774.5" y="826.0" width="12.5" height="12.5" fill="#7b8c94" stroke="#62727a" stroke-width="1"/><path d="M1777 832.5 l3 3.5 l5 -7" stroke="#e8f0f2" stroke-width="1.6" fill="none"/><rect x="1825" y="830.5" width="20" height="4" rx="2" fill="#627279"/><ellipse cx="1855" cy="832.5" rx="9" ry="6" fill="url(#thg)" stroke="#5f6f77" stroke-width="1"/><rect x="1652" y="847.5" width="18" height="18" fill="#c8d4d8"/><path d="M1654.5 857.1 L1663 857.1 L1667.5 861.6 L1667.5 862.6 L1659 862.6 L1654.5 858.1 Z" fill="#dce8ec" stroke="#44525a" stroke-width="1.1" stroke-linejoin="round"/><path d="M1654.5 853.8 L1663 853.8 L1667.5 858.3 L1667.5 859.3 L1659 859.3 L1654.5 854.8 Z" fill="#dce8ec" stroke="#44525a" stroke-width="1.1" stroke-linejoin="round"/><path d="M1654.5 850.5 L1663 850.5 L1667.5 855.0 L1667.5 856.0 L1659 856.0 L1654.5 851.5 Z" fill="#dce8ec" stroke="#44525a" stroke-width="1.1" stroke-linejoin="round"/><text x="1675" y="860.5" font-size="11.5" fill="#dce8ec" textLength="76" lengthAdjust="spacingAndGlyphs" font-family='"Liberation Sans", sans-serif'>PTV Rastermaps</text><rect x="1774.5" y="850.0" width="12.5" height="12.5" fill="#7b8c94" stroke="#62727a" stroke-width="1"/><rect x="1825" y="854.5" width="20" height="4" rx="2" fill="#627279"/><ellipse cx="1855" cy="856.5" rx="9" ry="6" fill="url(#thg)" stroke="#5f6f77" stroke-width="1"/><rect x="1633" y="882.5" width="50" height="15.5" rx="5" fill="#5c5c5c" stroke="#d8d8d8" stroke-width="1.3"/><rect x="1637.5" y="887.5" width="39.5" height="6" fill="#4a4a4a" stroke="#e8e8e8" stroke-width="1"/><rect x="1638" y="888" width="9" height="5" fill="#000"/><rect x="1658" y="888" width="10" height="5" fill="#000"/><rect x="1678.5" y="882.5" width="152" height="15.5" rx="5" fill="#5c5c5c" stroke="#d8d8d8" stroke-width="1.3"/><text x="1700" y="894.5" font-size="11.5" textLength="108" lengthAdjust="spacingAndGlyphs" fill="#ececec" font-family='"Liberation Sans", sans-serif'>52,986949°, 12,727956°</text><rect x="1866" y="883" width="10" height="15" rx="5" fill="#5a5a5a" stroke="#d8d8d8" stroke-width="1.5"/></g></svg>
</body></html>
